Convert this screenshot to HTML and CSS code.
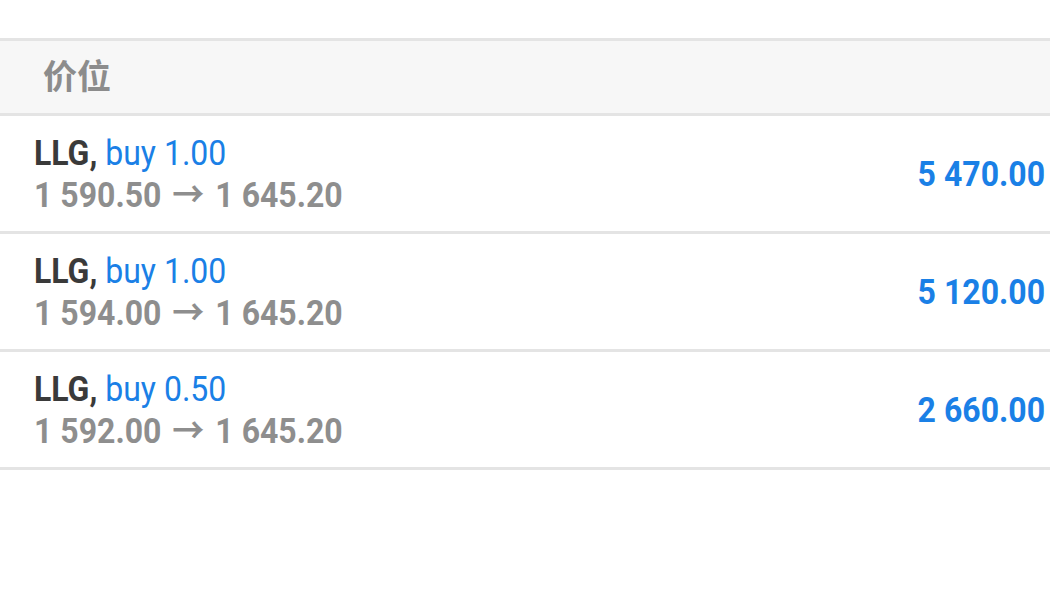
FILE: index.html
```html
<!DOCTYPE html>
<html lang="zh">
<head>
    <meta charset="UTF-8">
    <meta name="viewport" content="width=device-width, initial-scale=1.0">
    <title>价位</title>
    <link rel="stylesheet" href="styles.css">
</head>
<body>

    <div class="list">
        <div class="list-header">价位</div>

        <div class="row">
            <div class="info">
                <div class="title"><span class="symbol">LLG,</span> <span class="deal">buy 1.00</span></div>
                <div class="prices">1 590.50 <span class="arrow">→</span> 1 645.20</div>
            </div>
            <div class="profit">5 470.00</div>
        </div>

        <div class="row">
            <div class="info">
                <div class="title"><span class="symbol">LLG,</span> <span class="deal">buy 1.00</span></div>
                <div class="prices">1 594.00 <span class="arrow">→</span> 1 645.20</div>
            </div>
            <div class="profit">5 120.00</div>
        </div>

        <div class="row">
            <div class="info">
                <div class="title"><span class="symbol">LLG,</span> <span class="deal">buy 0.50</span></div>
                <div class="prices">1 592.00 <span class="arrow">→</span> 1 645.20</div>
            </div>
            <div class="profit">2 660.00</div>
        </div>
    </div>

</body>
</html>
```

FILE: styles.css
```css
body {
    margin: 0;
    background: #ffffff;
    font-family: Roboto, "Noto Sans CJK SC", sans-serif;
}

.list {
    margin-top: 38px;
    border-top: 3px solid #e4e4e4;
}

.list-header {
    height: 67px;
    padding: 0 0 5px 43px;
    display: flex;
    align-items: center;
    background: #f7f7f7;
    border-bottom: 3px solid #e4e4e4;
    color: #8c8c8c;
    font-size: 34px;
    font-weight: bold;
    font-family: "Noto Sans CJK SC", sans-serif;
}

.row {
    height: 115px;
    padding: 0 5px 0 34px;
    display: flex;
    align-items: center;
    justify-content: space-between;
    border-bottom: 3px solid #e4e4e4;
}

/* the original is a little taller than wide */
.info, .profit {
    transform: scaleY(1.1);
}

.info {
    line-height: 38px;
    font-size: 32px;
    transform-origin: left center;
}

.symbol {
    color: #3a3a3a;
    font-weight: bold;
}

.deal {
    color: #1a80e6;
}

.prices {
    color: #8e8e8e;
    font-weight: bold;
}

.arrow {
    margin: 0 3px;
}

.profit {
    color: #1a80e6;
    font-size: 32px;
    font-weight: bold;
    transform-origin: right center;
}
```
